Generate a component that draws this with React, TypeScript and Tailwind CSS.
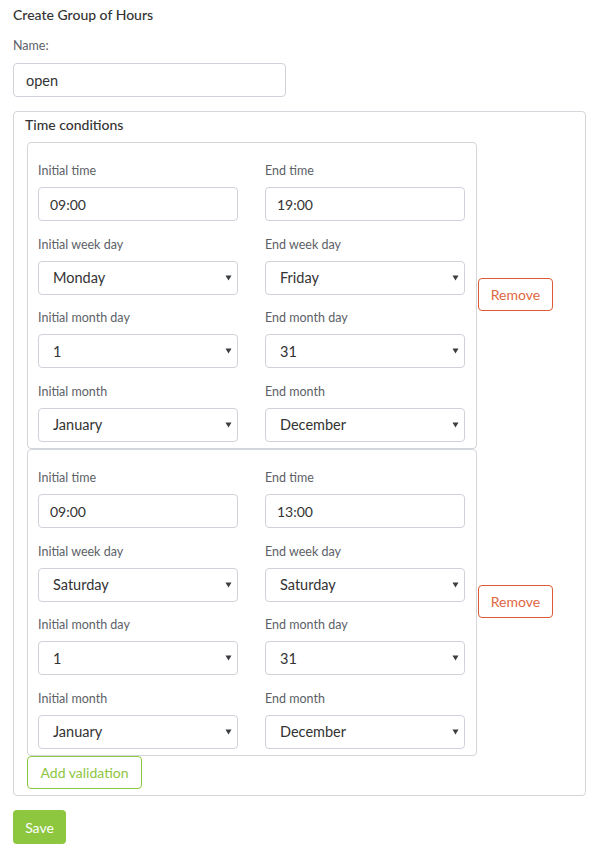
const weekDays = ["Monday", "Tuesday", "Wednesday", "Thursday", "Friday", "Saturday", "Sunday"];
const months = [
  "January", "February", "March", "April", "May", "June",
  "July", "August", "September", "October", "November", "December",
];
const monthDays = Array.from({ length: 31 }, (_, i) => String(i + 1));

type Condition = {
  startTime: string;
  endTime: string;
  startWeekDay: string;
  endWeekDay: string;
  startMonthDay: string;
  endMonthDay: string;
  startMonth: string;
  endMonth: string;
};

const conditions: Condition[] = [
  {
    startTime: "09:00", endTime: "19:00",
    startWeekDay: "Monday", endWeekDay: "Friday",
    startMonthDay: "1", endMonthDay: "31",
    startMonth: "January", endMonth: "December",
  },
  {
    startTime: "09:00", endTime: "13:00",
    startWeekDay: "Saturday", endWeekDay: "Saturday",
    startMonthDay: "1", endMonthDay: "31",
    startMonth: "January", endMonth: "December",
  },
];

function Label({ children }: { children: React.ReactNode }) {
  return <div className="h-[18px] leading-[18px] text-[12.5px] text-[#5c6167] mb-[7px]">{children}</div>;
}

function TextField({ value }: { value: string }) {
  return (
    <input
      readOnly
      value={value}
      className="block w-full h-[34px] px-[11px] rounded-[4px] border border-[#cfd3d9] bg-white text-[14px] text-[#333] outline-none"
    />
  );
}

function SelectField({ value, options }: { value: string; options: string[] }) {
  return (
    <div className="relative h-[34px]">
      <select
        value={value}
        onChange={() => {}}
        className="appearance-none block w-full h-full pl-[14px] pr-6 rounded-[4px] border border-[#cfd3d9] bg-white text-[14.5px] text-[#333] outline-none"
      >
        {options.map((o) => (
          <option key={o}>{o}</option>
        ))}
      </select>
      {/* caret */}
      <svg className="absolute right-[6px] top-[14px] pointer-events-none" width="7" height="6" viewBox="0 0 7 6">
        <path d="M0.5 0.5h6L3.5 5.5z" fill="#3a3d41" />
      </svg>
    </div>
  );
}

function Field({ label, children }: { label: string; children: React.ReactNode }) {
  return (
    <div>
      <Label>{label}</Label>
      {children}
    </div>
  );
}

function ConditionCard({ c }: { c: Condition }) {
  return (
    <div className="flex items-center">
      <div className="w-[450px] border border-[#d3d6db] rounded-[4px] pt-[19px] pb-[6px] pl-[10px] pr-[11px]">
        <div className="grid grid-cols-[200px_200px] gap-x-[27px] gap-y-[14.7px]">
          <Field label="Initial time"><TextField value={c.startTime} /></Field>
          <Field label="End time"><TextField value={c.endTime} /></Field>
          <Field label="Initial week day"><SelectField value={c.startWeekDay} options={weekDays} /></Field>
          <Field label="End week day"><SelectField value={c.endWeekDay} options={weekDays} /></Field>
          <Field label="Initial month day"><SelectField value={c.startMonthDay} options={monthDays} /></Field>
          <Field label="End month day"><SelectField value={c.endMonthDay} options={monthDays} /></Field>
          <Field label="Initial month"><SelectField value={c.startMonth} options={months} /></Field>
          <Field label="End month"><SelectField value={c.endMonth} options={months} /></Field>
        </div>
      </div>
      <button className="ml-[1px] mb-[3px] w-[75px] h-[33px] rounded-[4px] border border-[#d95a33] text-[14px] text-[#e0663f] bg-white">
        Remove
      </button>
    </div>
  );
}

export default function App() {
  return (
    <div className="min-h-screen bg-white px-[13px] pt-[5px] font-['Lato','Noto_Sans',sans-serif]">
      <div className="h-[20px] leading-[20px] text-[14px] font-medium text-[#333]">Create Group of Hours</div>

      <div className="mt-[12px] h-[18px] leading-[18px] text-[12.5px] text-[#5c6167]">Name:</div>
      <input
        readOnly
        value="open"
        className="mt-[8px] block w-[273px] h-[34px] px-[12px] rounded-[4px] border border-[#cfd3d9] bg-white text-[14.5px] text-[#333] outline-none"
      />

      <div className="mt-[14px] w-[573px] h-[685px] border border-[#d3d6db] rounded-[4px]">
        <div className="pt-[3px] pl-[11px] h-[23px] leading-[20px] text-[14px] font-medium text-[#333]">
          Time conditions
        </div>
        <div className="pl-[13px] pt-[7px]">
          {conditions.map((c, i) => (
            <ConditionCard key={i} c={c} />
          ))}
          <button className="w-[115px] h-[33px] rounded-[4px] border border-[#8dc63f] text-[14px] text-[#8dc63f] bg-white">
            Add validation
          </button>
        </div>
      </div>

      <button className="mt-[14px] w-[53px] h-[34px] rounded-[4px] bg-[#8dc63f] text-[14px] text-white">
        Save
      </button>
    </div>
  );
}
